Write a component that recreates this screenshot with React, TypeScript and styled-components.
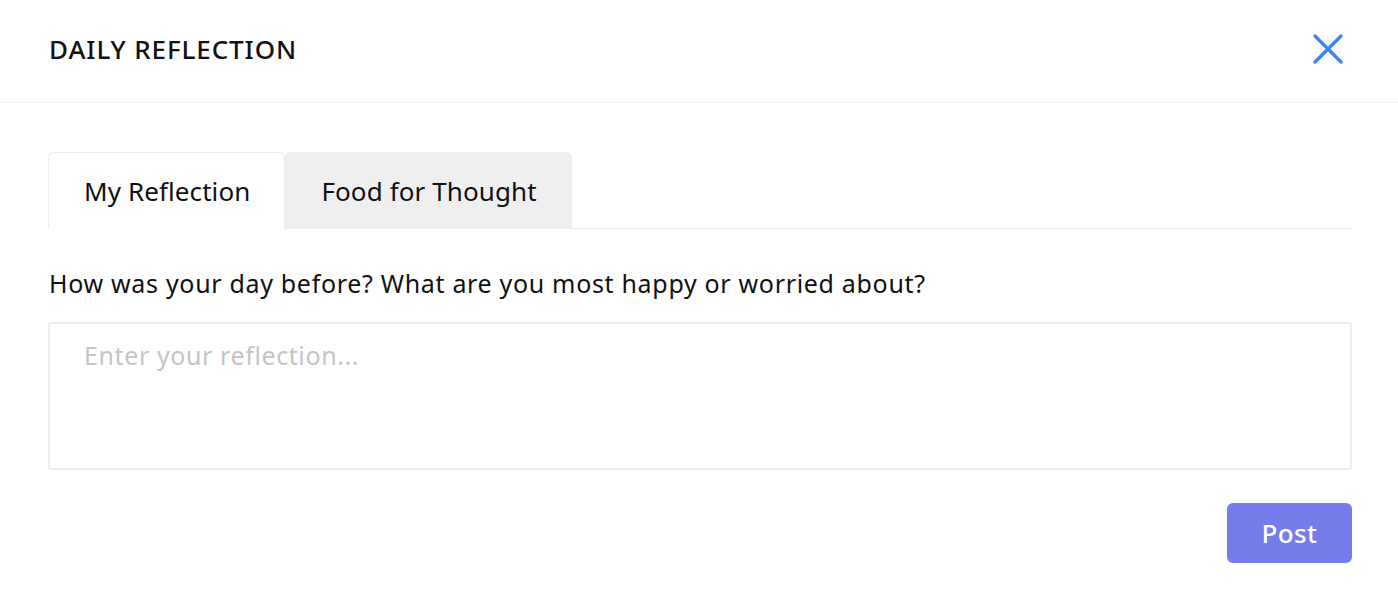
import React, { useState } from "react";
import styled, { createGlobalStyle } from "styled-components";

const GlobalStyle = createGlobalStyle`
  html, body {
    margin: 0;
    padding: 0;
    background: #ffffff;
  }
  body {
    font-family: "Noto Sans", "Open Sans", sans-serif;
    color: #111111;
  }
  * {
    box-sizing: border-box;
  }
`;

type TabKey = "mine" | "food";

const Modal = styled.div`
  width: 1398px;
  height: 606px;
  background: #ffffff;
  display: flex;
  flex-direction: column;
`;

const Header = styled.header`
  height: 103px;
  padding: 0 46px 4px 49px;
  display: flex;
  align-items: center;
  justify-content: space-between;
  border-bottom: 1px solid #efeff3;
`;

const Title = styled.h1`
  margin: 0;
  font-size: 26px;
  font-weight: 500;
  letter-spacing: 0.9px;
  color: #111111;
`;

const CloseButton = styled.button`
  width: 40px;
  height: 40px;
  padding: 0;
  margin: 0 4px 0 0;
  border: 0;
  background: transparent;
  display: flex;
  align-items: center;
  justify-content: center;
  cursor: pointer;
`;

const Body = styled.div`
  padding: 49px 46px 0 48px;
  display: flex;
  flex-direction: column;
`;

const TabList = styled.div`
  display: flex;
  border-bottom: 1px solid #ececf0;
`;

const Tab = styled.button<{ $active: boolean }>`
  height: 77px;
  padding: 0 34px 0 35px;
  margin-bottom: -1px;
  font-family: inherit;
  font-size: 26px;
  letter-spacing: 0.1px;
  color: #111111;
  cursor: pointer;
  border-radius: 6px 6px 0 0;
  border: 1px solid ${(p) => (p.$active ? "#ececf0" : "transparent")};
  border-bottom-color: ${(p) => (p.$active ? "#ffffff" : "transparent")};
  background: ${(p) => (p.$active ? "#ffffff" : "#efefef")};
`;

const Question = styled.p`
  margin: 36px 0 0 1px;
  font-size: 25px;
  line-height: 36px;
  letter-spacing: 0.68px;
  color: #111111;
`;

const Reflection = styled.textarea`
  margin-top: 21px;
  height: 148px;
  padding: 13px 34px;
  border: 2px solid #ececf0;
  border-radius: 4px;
  resize: none;
  font-family: inherit;
  font-size: 25px;
  line-height: 36px;
  letter-spacing: 0.6px;
  color: #111111;
  outline: none;

  &::placeholder {
    color: #c4c4c4;
  }
`;

const Actions = styled.div`
  display: flex;
  justify-content: flex-end;
  margin-top: 33px;
`;

const PostButton = styled.button`
  width: 125px;
  height: 60px;
  border: 0;
  border-radius: 6px;
  background: #757ded;
  color: #ffffff;
  font-family: inherit;
  font-size: 26px;
  font-weight: 500;
  letter-spacing: 0.4px;
  cursor: pointer;
`;

function CloseIcon() {
  return (
    <svg width="32" height="32" viewBox="0 0 32 32" aria-hidden="true">
      <path
        d="M3 3 L29 29 M29 3 L3 29"
        stroke="#3a86f6"
        strokeWidth="3.4"
        strokeLinecap="round"
        fill="none"
      />
    </svg>
  );
}

export default function App() {
  const [tab, setTab] = useState<TabKey>("mine");
  const [text, setText] = useState("");

  return (
    <Modal>
      <GlobalStyle />
      <Header>
        <Title>DAILY REFLECTION</Title>
        <CloseButton aria-label="Close">
          <CloseIcon />
        </CloseButton>
      </Header>
      <Body>
        <TabList>
          <Tab $active={tab === "mine"} onClick={() => setTab("mine")}>
            My Reflection
          </Tab>
          <Tab $active={tab === "food"} onClick={() => setTab("food")}>
            Food for Thought
          </Tab>
        </TabList>
        <Question>
          How was your day before? What are you most happy or worried about?
        </Question>
        <Reflection
          placeholder="Enter your reflection..."
          value={text}
          onChange={(e) => setText(e.target.value)}
        />
        <Actions>
          <PostButton>Post</PostButton>
        </Actions>
      </Body>
    </Modal>
  );
}
